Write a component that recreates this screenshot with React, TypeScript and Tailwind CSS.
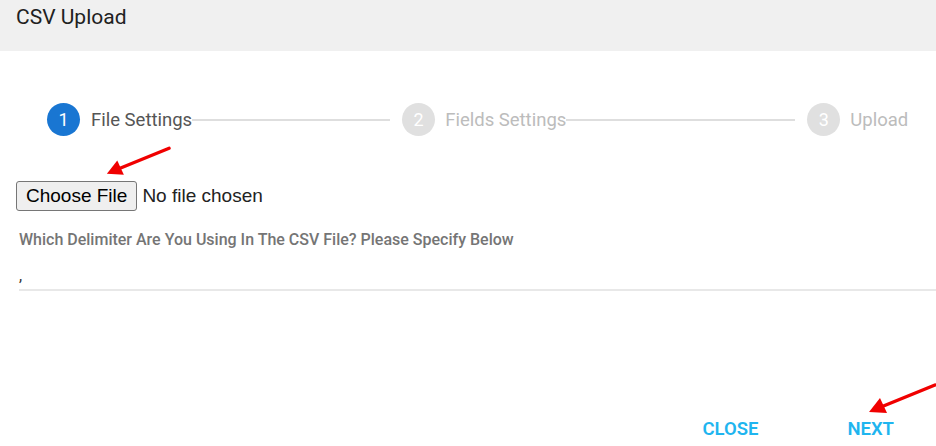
const steps = [
  { n: 1, label: "File Settings", active: true, line: "w-[198px]" },
  { n: 2, label: "Fields Settings", active: false, line: "w-[229px]" },
  { n: 3, label: "Upload", active: false, line: "" },
];

const Arrow = ({ className }: { className: string }) => (
  <svg viewBox="0 0 70 32" className={className}>
    <line x1="68" y1="2" x2="14" y2="24" stroke="#f00000" strokeWidth="3.5" strokeLinecap="round" />
    <polygon points="2,29 13,15 20,30" fill="#f00000" />
  </svg>
);

const Stepper = () => {
  return (
    <div className="flex items-center pl-[47px] mt-[52px] h-[33px]">
      {steps.map((step) => (
        <div key={step.n} className="flex items-center">
          <div
            className={
              step.active
                ? "w-[33px] h-[33px] rounded-full bg-[#1976d2] text-white flex items-center justify-center text-[18px]"
                : "w-[33px] h-[33px] rounded-full bg-[#e0e0e0] text-white flex items-center justify-center text-[18px]"
            }
          >
            {step.n}
          </div>
          <span
            className={
              step.active
                ? "ml-[11px] pt-[3px] text-[18.5px] text-[#555555]"
                : "ml-[10px] pt-[3px] text-[18.5px] text-[#bcbcbc]"
            }
          >
            {step.label}
          </span>
          {step.line && <div className={`${step.line} h-[2px] bg-[#dedede] mr-[12px]`}></div>}
        </div>
      ))}
    </div>
  );
};

export default function App() {
  return (
    <div className="relative w-[936px] h-[446px] overflow-hidden bg-white font-['Roboto',sans-serif]">
      <div className="h-[51px] bg-[#f0f0f0] pl-4 pt-[3px]">
        <h1 className="text-[21px] leading-[28px] text-[#212121]">CSV Upload</h1>
      </div>

      <Stepper />

      <div className="pl-4 mt-[45px] flex items-center">
        <span className="h-[30px] px-[9px] flex items-center bg-[#efefef] border border-[#767676] rounded-[3px] text-[19px] text-black font-['Liberation_Sans',Arial,sans-serif]">
          Choose File
        </span>
        <span className="ml-[5px] text-[19px] text-[#222222] font-['Liberation_Sans',Arial,sans-serif]">
          No file chosen
        </span>
      </div>

      <div className="pl-[19px] mt-[19px]">
        <label className="block text-[16px] leading-[20px] font-medium text-[#757575]">
          Which Delimiter Are You Using In The CSV File? Please Specify Below
        </label>
        <div className="mt-[12px] h-[29px] border-b-2 border-[#e8e8e8] text-[16px] text-[#333333] leading-[28px]">
          ,
        </div>
      </div>

      <div className="flex justify-end gap-[89px] pr-[42px] mt-[120px]">
        <button className="text-[18.5px] font-semibold text-[#1fb5ef] leading-[36px]">CLOSE</button>
        <button className="text-[18.5px] font-semibold text-[#1fb5ef] leading-[36px]">NEXT</button>
      </div>

      <Arrow className="absolute left-[105px] top-[146px] w-[66px] h-[31px]" />
      <Arrow className="absolute left-[867px] top-[383px] w-[70px] h-[32px]" />
    </div>
  );
}
